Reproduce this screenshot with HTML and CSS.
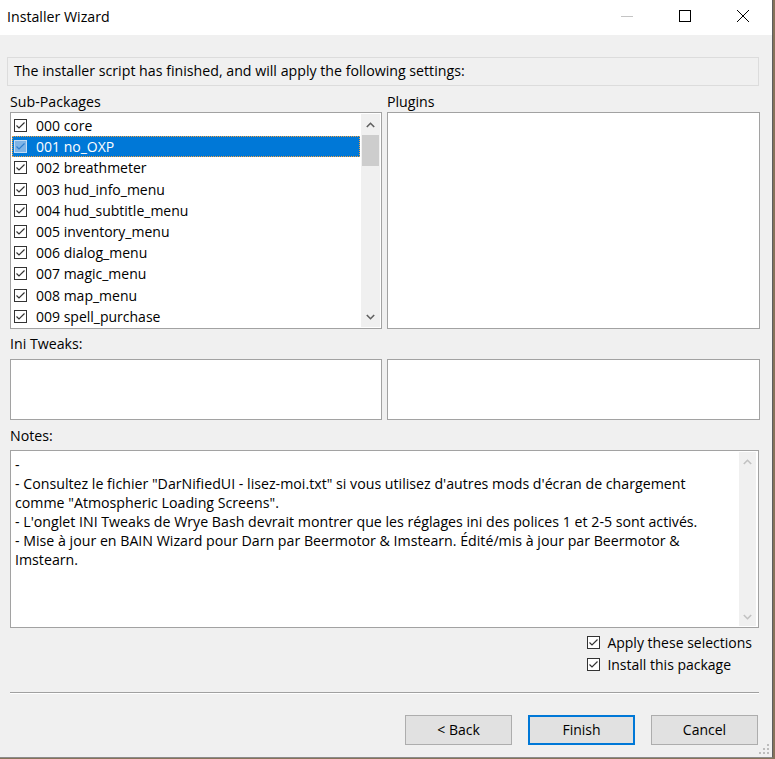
FILE: index.html
```html
<!DOCTYPE html>
<html>
<head>
<meta charset="utf-8">
<link rel="stylesheet" href="styles.css">
</head>
<body>
<div class="desktop">
  <div class="window">
    <div class="titlebar">
      <span class="title">Installer Wizard</span>
      <div class="controls">
        <span class="ctl"><svg width="14" height="14" viewBox="0 0 14 14"><line x1="1" y1="7.5" x2="13" y2="7.5" stroke="#c4c4c4" stroke-width="1"/></svg></span>
        <span class="ctl"><svg width="14" height="14" viewBox="0 0 14 14"><rect x="1.5" y="1.5" width="11" height="11" fill="none" stroke="#000" stroke-width="1"/></svg></span>
        <span class="ctl"><svg width="14" height="14" viewBox="0 0 14 14"><path d="M1 1 L13 13 M13 1 L1 13" stroke="#000" stroke-width="1" fill="none"/></svg></span>
      </div>
    </div>
    <div class="body">
      <div class="banner">The installer script has finished, and will apply the following settings:</div>

      <div class="two">
        <div class="col">
          <div class="label">Sub-Packages</div>
          <div class="box listbox">
            <div class="items">
              <div class="item"><span class="cb"><svg width="13" height="13" viewBox="0 0 13 13"><rect x="0.5" y="0.5" width="12" height="12" fill="#fff" stroke="#333"/><path d="M2.5 6.5 L5 9 L10.5 3.5" fill="none" stroke="#333" stroke-width="1.2"/></svg></span>000 core</div>
              <div class="item sel"><span class="cb"><svg width="13" height="13" viewBox="0 0 13 13"><rect x="0.5" y="0.5" width="12" height="12" fill="#7fb4e6" stroke="#c4dcf3"/><path d="M2.5 6.5 L5 9 L10.5 3.5" fill="none" stroke="#2f7fcf" stroke-width="1.2"/></svg></span>001 no_OXP</div>
              <div class="item"><span class="cb"><svg width="13" height="13" viewBox="0 0 13 13"><rect x="0.5" y="0.5" width="12" height="12" fill="#fff" stroke="#333"/><path d="M2.5 6.5 L5 9 L10.5 3.5" fill="none" stroke="#333" stroke-width="1.2"/></svg></span>002 breathmeter</div>
              <div class="item"><span class="cb"><svg width="13" height="13" viewBox="0 0 13 13"><rect x="0.5" y="0.5" width="12" height="12" fill="#fff" stroke="#333"/><path d="M2.5 6.5 L5 9 L10.5 3.5" fill="none" stroke="#333" stroke-width="1.2"/></svg></span>003 hud_info_menu</div>
              <div class="item"><span class="cb"><svg width="13" height="13" viewBox="0 0 13 13"><rect x="0.5" y="0.5" width="12" height="12" fill="#fff" stroke="#333"/><path d="M2.5 6.5 L5 9 L10.5 3.5" fill="none" stroke="#333" stroke-width="1.2"/></svg></span>004 hud_subtitle_menu</div>
              <div class="item"><span class="cb"><svg width="13" height="13" viewBox="0 0 13 13"><rect x="0.5" y="0.5" width="12" height="12" fill="#fff" stroke="#333"/><path d="M2.5 6.5 L5 9 L10.5 3.5" fill="none" stroke="#333" stroke-width="1.2"/></svg></span>005 inventory_menu</div>
              <div class="item"><span class="cb"><svg width="13" height="13" viewBox="0 0 13 13"><rect x="0.5" y="0.5" width="12" height="12" fill="#fff" stroke="#333"/><path d="M2.5 6.5 L5 9 L10.5 3.5" fill="none" stroke="#333" stroke-width="1.2"/></svg></span>006 dialog_menu</div>
              <div class="item"><span class="cb"><svg width="13" height="13" viewBox="0 0 13 13"><rect x="0.5" y="0.5" width="12" height="12" fill="#fff" stroke="#333"/><path d="M2.5 6.5 L5 9 L10.5 3.5" fill="none" stroke="#333" stroke-width="1.2"/></svg></span>007 magic_menu</div>
              <div class="item"><span class="cb"><svg width="13" height="13" viewBox="0 0 13 13"><rect x="0.5" y="0.5" width="12" height="12" fill="#fff" stroke="#333"/><path d="M2.5 6.5 L5 9 L10.5 3.5" fill="none" stroke="#333" stroke-width="1.2"/></svg></span>008 map_menu</div>
              <div class="item"><span class="cb"><svg width="13" height="13" viewBox="0 0 13 13"><rect x="0.5" y="0.5" width="12" height="12" fill="#fff" stroke="#333"/><path d="M2.5 6.5 L5 9 L10.5 3.5" fill="none" stroke="#333" stroke-width="1.2"/></svg></span>009 spell_purchase</div>
            </div>
            <div class="vscroll">
              <span class="arrow"><svg width="9" height="6" viewBox="0 0 9 6"><path d="M0.8 5 L4.5 1.3 L8.2 5" fill="none" stroke="#606060" stroke-width="1.6"/></svg></span>
              <div class="track"><div class="thumb"></div></div>
              <span class="arrow"><svg width="9" height="6" viewBox="0 0 9 6"><path d="M0.8 1 L4.5 4.7 L8.2 1" fill="none" stroke="#606060" stroke-width="1.6"/></svg></span>
            </div>
          </div>
        </div>
        <div class="col">
          <div class="label">Plugins</div>
          <div class="box listbox"></div>
        </div>
      </div>

      <div class="label ini-label">Ini Tweaks:</div>
      <div class="two">
        <div class="box tweak"></div>
        <div class="box tweak"></div>
      </div>

      <div class="label notes-label">Notes:</div>
      <div class="box notes">
        <div class="notes-text">-
- Consultez le fichier "DarNifiedUI - lisez-moi.txt" si vous utilisez d'autres mods d'écran de chargement
comme "Atmospheric Loading Screens".
- L'onglet INI Tweaks de Wrye Bash devrait montrer que les réglages ini des polices 1 et 2-5 sont activés.
- Mise à jour en BAIN Wizard pour Darn par Beermotor &amp; Imstearn. Édité/mis à jour par Beermotor &amp;
Imstearn.</div>
        <div class="vscroll light">
          <span class="arrow"><svg width="9" height="6" viewBox="0 0 9 6"><path d="M0.8 5 L4.5 1.3 L8.2 5" fill="none" stroke="#c2c2c2" stroke-width="1.6"/></svg></span>
          <div class="track"></div>
          <span class="arrow"><svg width="9" height="6" viewBox="0 0 9 6"><path d="M0.8 1 L4.5 4.7 L8.2 1" fill="none" stroke="#c2c2c2" stroke-width="1.6"/></svg></span>
        </div>
      </div>

      <div class="options">
        <div class="opt-list">
          <div class="opt"><span class="cb"><svg width="13" height="13" viewBox="0 0 13 13"><rect x="0.5" y="0.5" width="12" height="12" fill="#fff" stroke="#333"/><path d="M2.5 6.5 L5 9 L10.5 3.5" fill="none" stroke="#333" stroke-width="1.2"/></svg></span>Apply these selections</div>
          <div class="opt"><span class="cb"><svg width="13" height="13" viewBox="0 0 13 13"><rect x="0.5" y="0.5" width="12" height="12" fill="#fff" stroke="#333"/><path d="M2.5 6.5 L5 9 L10.5 3.5" fill="none" stroke="#333" stroke-width="1.2"/></svg></span>Install this package</div>
        </div>
      </div>

      <div class="separator"></div>

      <div class="buttons">
        <button class="btn">&lt; Back</button>
        <button class="btn default">Finish</button>
        <button class="btn">Cancel</button>
      </div>
      <div class="grip"><svg width="10" height="10" viewBox="0 0 10 10" fill="#bdbdbd"><rect x="8" y="0" width="2" height="2"/><rect x="4" y="4" width="2" height="2"/><rect x="8" y="4" width="2" height="2"/><rect x="0" y="8" width="2" height="2"/><rect x="4" y="8" width="2" height="2"/><rect x="8" y="8" width="2" height="2"/></svg></div>
    </div>
  </div>
</div>
</body>
</html>
```
FILE: styles.css
```css
* { box-sizing: border-box; }
html, body { margin: 0; padding: 0; }
body {
  width: 775px;
  height: 759px;
  overflow: hidden;
  background: #7d6b55;
  font-family: "Open Sans", "Noto Sans", sans-serif;
  color: #000;
}
.desktop {
  width: 775px;
  height: 759px;
  background: #86735a;
}
.window {
  width: 773px;
  height: 758px;
  background: #f0f0f0;
  border-right: 1px solid #5e5e5e;
  border-bottom: 1px solid #8b8b8b;
  display: flex;
  flex-direction: column;
}
.titlebar {
  height: 35px;
  background: #fff;
  display: flex;
  align-items: center;
  justify-content: space-between;
  padding-left: 7px;
  flex: none;
}
.title {
  font-size: 14.2px;
  margin-top: -3px;
}
.controls {
  display: flex;
  height: 35px;
  margin-top: -3px;
}
.ctl {
  width: 58px;
  display: flex;
  align-items: center;
  justify-content: center;
}
.body {
  flex: 1;
  padding: 22px 13px 0 10px;
  position: relative;
}
.banner {
  margin-left: -3px;
  height: 29px;
  border: 1px solid #dcdcdc;
  font-size: 14.2px;
  line-height: 26px;
  padding-left: 6px;
}
.two {
  display: grid;
  grid-template-columns: 372px 373px;
  column-gap: 5px;
}
.label {
  font-size: 14.2px;
  line-height: 18px;
  height: 19px;
  padding-top: 6px;
  box-sizing: content-box;
}
.col .label { padding-top: 7px; }
.box {
  background: #fff;
  border: 1px solid #a2a2a2;
}
.listbox {
  height: 217px;
  display: flex;
  padding: 1px;
}
.items {
  flex: 1;
  padding-top: 1px;
}
.item {
  height: 21.2px;
  display: flex;
  align-items: center;
  font-size: 14px;
  padding-left: 2px;
  white-space: nowrap;
}
.item .cb { margin-right: 9px; }
.item.sel {
  background: #0078d7;
  color: #fff;
  outline: 1px dotted #f0a040;
  outline-offset: -1px;
}
.cb {
  display: inline-flex;
  width: 13px;
  height: 13px;
  flex: none;
}
.vscroll {
  width: 19px;
  display: flex;
  flex-direction: column;
  background: #f0f0f0;
  margin-left: 1px;
}
.vscroll .arrow {
  height: 21px;
  display: flex;
  align-items: center;
  justify-content: center;
  flex: none;
}
.vscroll .track {
  flex: 1;
  padding: 0 1px;
}
.thumb {
  height: 31px;
  background: #cdcdcd;
}
.ini-label { padding-top: 6px; margin-bottom: 5px; }
.tweak { height: 61px; }
.notes-label { padding-top: 7px; margin-bottom: 4px; }
.notes {
  height: 178px;
  display: flex;
  padding: 1px;
}
.notes-text {
  flex: 1;
  white-space: pre-line;
  font-size: 14.2px;
  line-height: 19px;
  padding: 3px 0 0 3px;
}
.vscroll.light {
  width: 17px;
  margin-right: 1px;
}
.vscroll.light .arrow { height: 19px; }
.options {
  display: flex;
  justify-content: flex-end;
  padding-top: 4px;
  padding-right: 7px;
}
.opt-list {
  display: flex;
  flex-direction: column;
}
.opt {
  display: flex;
  align-items: center;
  height: 21.5px;
  font-size: 14px;
  white-space: nowrap;
}
.opt .cb { margin-right: 7px; }
.separator {
  margin-top: 17px;
  height: 2px;
  border-top: 1px solid #a0a0a0;
  border-bottom: 1px solid #fff;
}
.buttons {
  display: flex;
  justify-content: flex-end;
  gap: 16px;
  margin-top: 21px;
  padding-right: 1px;
}
.btn {
  width: 107px;
  height: 30px;
  background: #e1e1e1;
  border: 1px solid #adadad;
  font-family: "Open Sans", "Noto Sans", sans-serif;
  font-size: 14px;
  color: #000;
  padding: 0 0 2px 0;
}
.btn.default {
  border: 2px solid #0078d7;
}
.grip {
  position: absolute;
  right: 3px;
  bottom: 3px;
  width: 10px;
  height: 10px;
  display: flex;
}
```
